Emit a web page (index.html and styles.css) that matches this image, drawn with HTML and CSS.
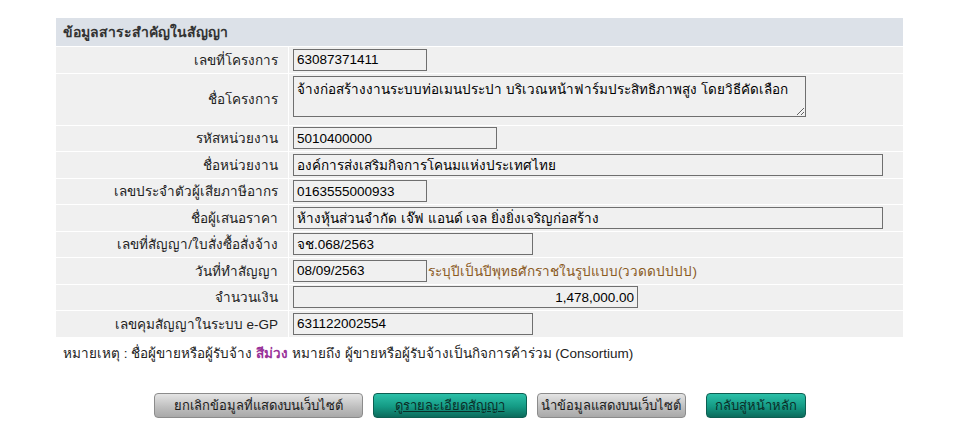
FILE: index.html
```html
<!DOCTYPE html>
<html lang="th">
<head>
  <meta charset="UTF-8">
  <title>ข้อมูลสาระสำคัญในสัญญา</title>
  <link rel="stylesheet" href="styles.css">
</head>
<body>

  <div class="panel">
    <div class="panel-head">ข้อมูลสาระสำคัญในสัญญา</div>

    <div class="form">
      <div class="lbl">เลขที่โครงการ</div>
      <div class="val"><input class="w-s" type="text" value="63087371411"></div>

      <div class="lbl tall">ชื่อโครงการ</div>
      <div class="val tall"><textarea>จ้างก่อสร้างงานระบบท่อเมนประปา บริเวณหน้าฟาร์มประสิทธิภาพสูง โดยวิธีคัดเลือก</textarea></div>

      <div class="lbl">รหัสหน่วยงาน</div>
      <div class="val"><input class="w-m" type="text" value="5010400000"></div>

      <div class="lbl">ชื่อหน่วยงาน</div>
      <div class="val"><input class="w-xl" type="text" value="องค์การส่งเสริมกิจการโคนมแห่งประเทศไทย"></div>

      <div class="lbl">เลขประจำตัวผู้เสียภาษีอากร</div>
      <div class="val"><input class="w-s" type="text" value="0163555000933"></div>

      <div class="lbl">ชื่อผู้เสนอราคา</div>
      <div class="val"><input class="w-xl" type="text" value="ห้างหุ้นส่วนจำกัด เจ๊ฟ แอนด์ เจล ยิ่งยิ่งเจริญก่อสร้าง"></div>

      <div class="lbl">เลขที่สัญญา/ใบสั่งซื้อสั่งจ้าง</div>
      <div class="val"><input class="w-l" type="text" value="จช.068/2563"></div>

      <div class="lbl">วันที่ทำสัญญา</div>
      <div class="val"><input class="w-s" type="text" value="08/09/2563"><span class="hint">ระบุปีเป็นปีพุทธศักราชในรูปแบบ(ววดดปปปป)</span></div>

      <div class="lbl">จำนวนเงิน</div>
      <div class="val"><input class="w-money" type="text" value="1,478,000.00"></div>

      <div class="lbl">เลขคุมสัญญาในระบบ e-GP</div>
      <div class="val"><input class="w-l" type="text" value="631122002554"></div>
    </div>

    <p class="note">หมายเหตุ : ชื่อผู้ขายหรือผู้รับจ้าง <b class="purple">สีม่วง</b> หมายถึง ผู้ขายหรือผู้รับจ้างเป็นกิจการค้าร่วม (Consortium)</p>
  </div>

  <div class="actions">
    <button class="btn btn-gray b1">ยกเลิกข้อมูลที่แสดงบนเว็บไซต์</button>
    <button class="btn btn-teal b2"><u>ดูรายละเอียดสัญญา</u></button>
    <button class="btn btn-gray b3">นำข้อมูลแสดงบนเว็บไซต์</button>
    <button class="btn btn-teal b4">กลับสู่หน้าหลัก</button>
  </div>

</body>
</html>
```

FILE: styles.css
```css
body {
  margin: 0;
  padding-top: 18px;
  font-family: Tahoma, "Liberation Sans", "Noto Sans", sans-serif;
  font-size: 13.5px;
  color: #222;
  background: #fff;
}

.panel {
  width: 847px;
  margin: 0 auto;
}

.panel-head {
  height: 28px;
  line-height: 28px;
  padding-left: 7px;
  background: #dce1e8;
  font-weight: bold;
  font-size: 14px;
  color: #333;
}

.form {
  display: grid;
  grid-template-columns: 232px 1fr;
  gap: 1px;
  padding-top: 1px;
  background: #fff;
}

.lbl, .val {
  background: #f0f0f0;
  height: 25.5px;
  display: flex;
  align-items: center;
}

.lbl {
  justify-content: flex-end;
  padding-right: 10px;
  color: #222;
}

.val {
  padding-left: 4px;
}

.lbl.tall, .val.tall {
  height: 51px;
}

.val.tall {
  align-items: flex-start;
  padding-top: 2px;
  box-sizing: border-box;
}

input, textarea {
  font-family: inherit;
  font-size: 13.5px;
  color: #000;
  background: #f0f0f0;
  border: 1px solid #6f6f6f;
  box-sizing: border-box;
  margin: 0;
}

input {
  height: 22px;
  padding: 0 3px;
}

textarea {
  width: 513px;
  height: 41px;
  padding: 1px 3px;
  resize: vertical;
}

.w-s { width: 134px; }
.w-m { width: 204px; }
.w-l { width: 240px; }
.w-xl { width: 590px; }
.w-money { width: 345px; text-align: right; }

.hint {
  color: #8a5a1e;
  padding-left: 1px;
}

.note {
  margin: 5px 0 0 7px;
  color: #222;
}

.purple {
  color: #993399;
}

.actions {
  display: flex;
  justify-content: center;
  gap: 10px;
  margin-top: 29px;
}

.btn {
  height: 25px;
  font-family: inherit;
  font-size: 13px;
  white-space: nowrap;
  border-radius: 4px;
  padding: 0;
  cursor: pointer;
}

.btn-gray {
  color: #1a1a1a;
  border: 1px solid #8c8c8c;
  background: linear-gradient(#e4e4e4, #bdbdbd 60%, #a9a9a9);
}

.btn-teal {
  color: #0b2e28;
  border: 1px solid #0d5f52;
  background: linear-gradient(#2cc0a8, #149a84 55%, #0c6b5c);
}

.b1 { width: 209px; }
.b2 { width: 154px; }
.b3 { width: 149px; }
.b4 { width: 100px; margin-left: 10px; }
```
